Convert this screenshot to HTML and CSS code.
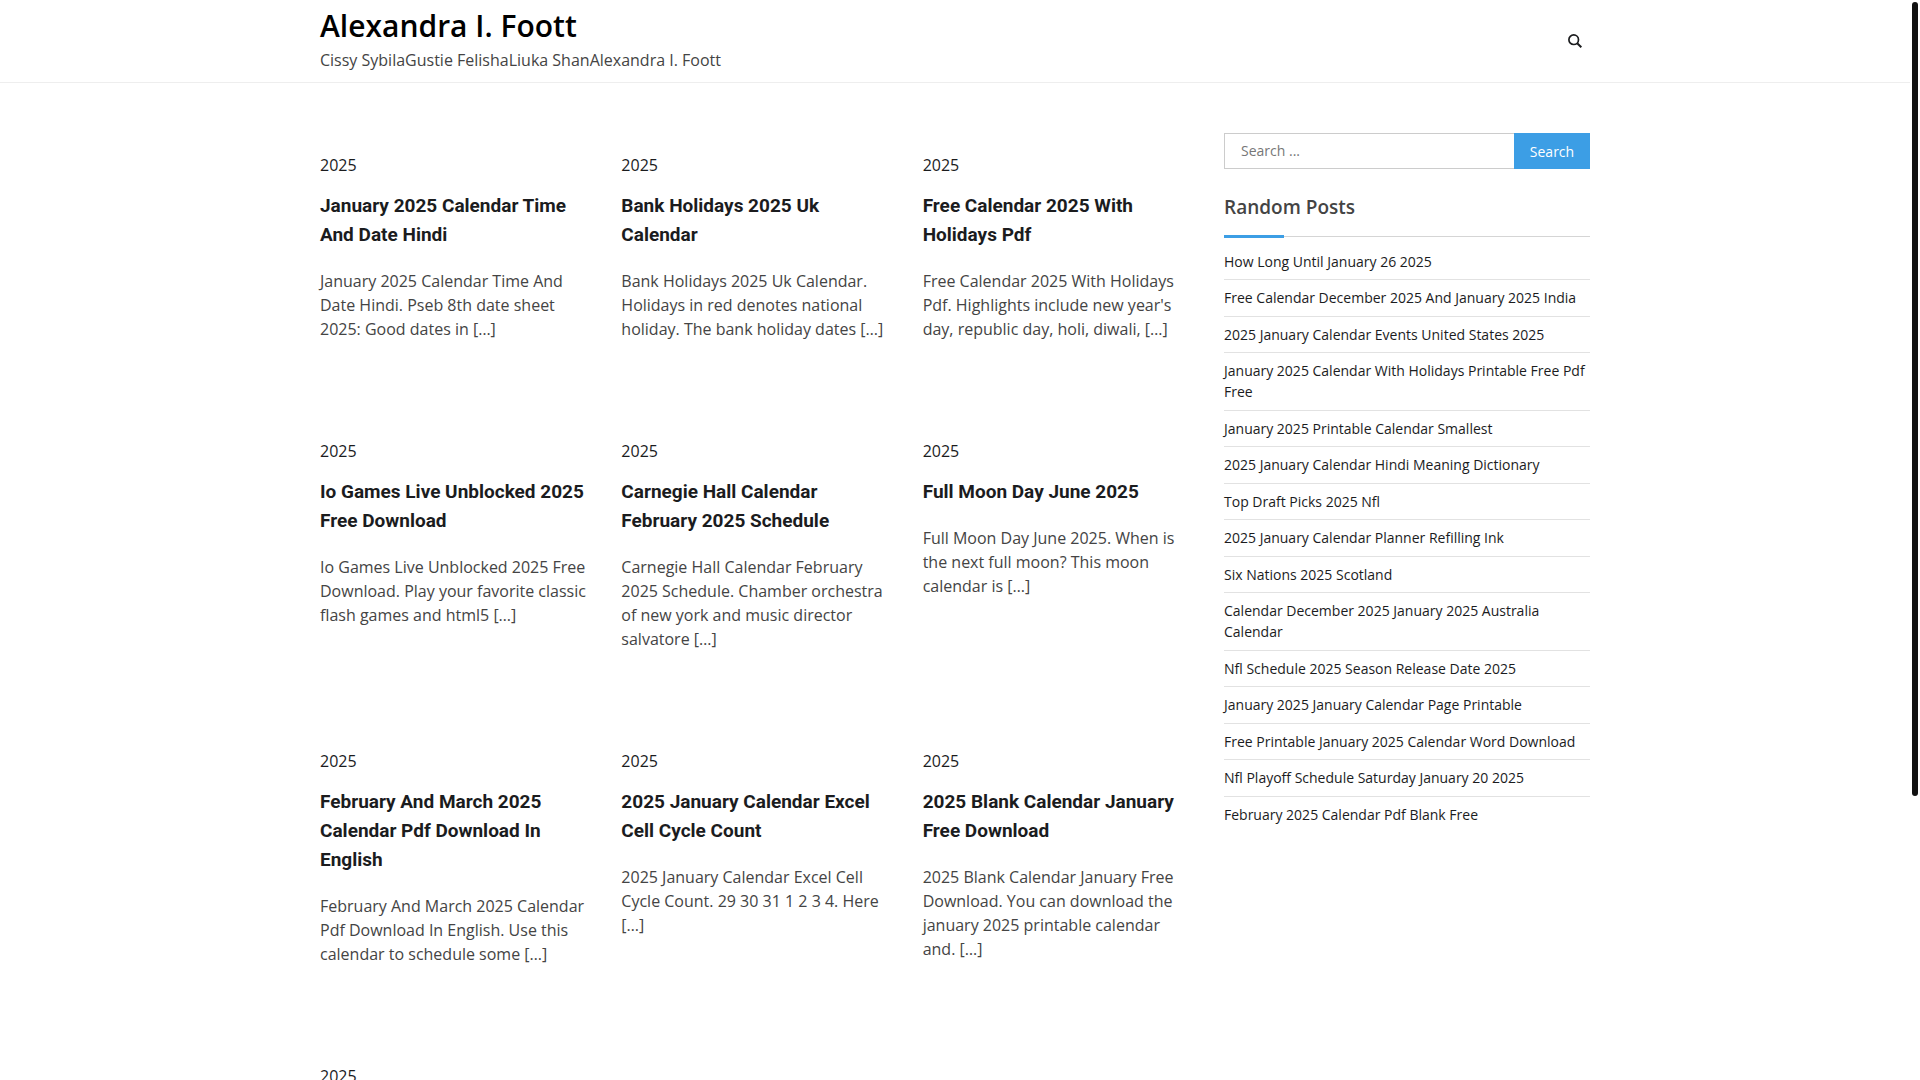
FILE: index.html
```
<!DOCTYPE html>
<html lang="en">
<head>
    <meta charset="UTF-8">
    <meta name="viewport" content="width=device-width, initial-scale=1.0">
    <title>Alexandra I. Foott</title>
    <link rel="stylesheet" href="styles.css">
</head>
<body>

    <header class="site-header">
        <div class="container header-inner">
            <div class="site-branding">
                <p class="site-title"><a href="#">Alexandra I. Foott</a></p>
                <p class="site-description">Cissy SybilaGustie FelishaLiuka ShanAlexandra I. Foott</p>
            </div>
            <button type="button" class="search-toggle" aria-label="Search">
                <svg width="14" height="14" viewBox="0 0 14 14" fill="none" stroke="currentColor">
                    <circle cx="5.7" cy="5.7" r="4.8" stroke-width="1.7" />
                    <path d="M9.2 9.2L13.3 13.3" stroke-width="2" />
                </svg>
            </button>
        </div>
    </header>

    <div class="container content">
        <main class="posts">
            <article class="post">
                <a class="category" href="#">2025</a>
                <h2><a href="#">January 2025 Calendar Time And Date Hindi</a></h2>
                <p>January 2025 Calendar Time And Date Hindi. Pseb 8th date sheet 2025: Good dates in […]</p>
            </article>
            <article class="post">
                <a class="category" href="#">2025</a>
                <h2><a href="#">Bank Holidays 2025 Uk Calendar</a></h2>
                <p>Bank Holidays 2025 Uk Calendar. Holidays in red denotes national holiday. The bank holiday dates […]</p>
            </article>
            <article class="post">
                <a class="category" href="#">2025</a>
                <h2><a href="#">Free Calendar 2025 With Holidays Pdf</a></h2>
                <p>Free Calendar 2025 With Holidays Pdf. Highlights include new year's day, republic day, holi, diwali, […]</p>
            </article>
            <article class="post">
                <a class="category" href="#">2025</a>
                <h2><a href="#">Io Games Live Unblocked 2025 Free Download</a></h2>
                <p>Io Games Live Unblocked 2025 Free Download. Play your favorite classic flash games and html5 […]</p>
            </article>
            <article class="post">
                <a class="category" href="#">2025</a>
                <h2><a href="#">Carnegie Hall Calendar February 2025 Schedule</a></h2>
                <p>Carnegie Hall Calendar February 2025 Schedule. Chamber orchestra of new york and music director salvatore […]</p>
            </article>
            <article class="post">
                <a class="category" href="#">2025</a>
                <h2><a href="#">Full Moon Day June 2025</a></h2>
                <p>Full Moon Day June 2025. When is the next full moon? This moon calendar is […]</p>
            </article>
            <article class="post">
                <a class="category" href="#">2025</a>
                <h2><a href="#">February And March 2025 Calendar Pdf Download In English</a></h2>
                <p>February And March 2025 Calendar Pdf Download In English. Use this calendar to schedule some […]</p>
            </article>
            <article class="post">
                <a class="category" href="#">2025</a>
                <h2><a href="#">2025 January Calendar Excel Cell Cycle Count</a></h2>
                <p>2025 January Calendar Excel Cell Cycle Count. 29 30 31 1 2 3 4. Here […]</p>
            </article>
            <article class="post">
                <a class="category" href="#">2025</a>
                <h2><a href="#">2025 Blank Calendar January Free Download</a></h2>
                <p>2025 Blank Calendar January Free Download. You can download the january 2025 printable calendar and. […]</p>
            </article>
            <article class="post">
                <a class="category" href="#">2025</a>
            </article>
        </main>

        <aside class="sidebar">
            <form class="search-form">
                <input type="search" placeholder="Search ..." aria-label="Search for:">
                <button type="submit">Search</button>
            </form>

            <h2 class="widget-title">Random Posts</h2>
            <ul class="post-list">
                <li><a href="#">How Long Until January 26 2025</a></li>
                <li><a href="#">Free Calendar December 2025 And January 2025 India</a></li>
                <li><a href="#">2025 January Calendar Events United States 2025</a></li>
                <li><a href="#">January 2025 Calendar With Holidays Printable Free Pdf Free</a></li>
                <li><a href="#">January 2025 Printable Calendar Smallest</a></li>
                <li><a href="#">2025 January Calendar Hindi Meaning Dictionary</a></li>
                <li><a href="#">Top Draft Picks 2025 Nfl</a></li>
                <li><a href="#">2025 January Calendar Planner Refilling Ink</a></li>
                <li><a href="#">Six Nations 2025 Scotland</a></li>
                <li><a href="#">Calendar December 2025 January 2025 Australia Calendar</a></li>
                <li><a href="#">Nfl Schedule 2025 Season Release Date 2025</a></li>
                <li><a href="#">January 2025 January Calendar Page Printable</a></li>
                <li><a href="#">Free Printable January 2025 Calendar Word Download</a></li>
                <li><a href="#">Nfl Playoff Schedule Saturday January 20 2025</a></li>
                <li><a href="#">February 2025 Calendar Pdf Blank Free</a></li>
            </ul>
        </aside>
    </div>

    <div class="scroll-thumb"></div>

</body>
</html>
```
FILE: styles.css
```
* {
    margin: 0;
    padding: 0;
    box-sizing: border-box;
}
body {
    font-family: "Open Sans", "Noto Sans", sans-serif;
    font-size: 16px;
    line-height: 24px;
    background-color: #fff;
    color: #444;
    margin-right: 10px;
}
a {
    color: #1b1c1e;
    text-decoration: none;
}
a:hover {
    color: #3c9ee5;
}
.container {
    width: 100%;
    max-width: 1300px;
    margin: 0 auto;
    padding: 0 15px;
}

/* header */
.site-header {
    border-bottom: 1px solid #eee;
}
.header-inner {
    display: flex;
    justify-content: space-between;
    align-items: center;
    padding-top: 8px;
    padding-bottom: 10px;
}
.site-title {
    font-size: 30px;
    font-weight: 600;
    line-height: 36px;
    margin-bottom: 4px;
}
.site-title a {
    color: #000;
}
.search-toggle {
    display: flex;
    padding: 10px 8px 8px;
    border: none;
    background: none;
    color: #1b1c1e;
    cursor: pointer;
}

/* posts */
.content {
    display: flex;
    align-items: flex-start;
    gap: 30px;
    padding-top: 50px;
}
.posts {
    flex: 1;
    display: grid;
    grid-template-columns: repeat(3, 1fr);
    column-gap: 30px;
}
.post {
    padding: 20px 0 78px;
}
.category {
    display: block;
    margin-bottom: 14px;
}
.post h2 {
    font-family: Roboto, sans-serif;
    font-size: 19px;
    font-weight: 700;
    line-height: 29px;
    margin-bottom: 20px;
}

/* sidebar */
.sidebar {
    width: 366px;
}
.search-form {
    display: flex;
    height: 36px;
    margin-bottom: 24px;
}
.search-form input {
    flex: 1;
    min-width: 0;
    padding: 0 16px 2px;
    border: 1px solid #ccc;
    border-right: none;
    font-family: inherit;
    font-size: 14px;
    outline: none;
}
.search-form input::placeholder {
    color: #777;
}
.search-form button {
    width: 76px;
    border: none;
    background-color: #3c9ee5;
    color: #fff;
    font-family: inherit;
    font-size: 14px;
    cursor: pointer;
}
.widget-title {
    position: relative;
    font-size: 19px;
    font-weight: 600;
    line-height: 28px;
    padding-bottom: 15px;
    margin-bottom: 7px;
    border-bottom: 1px solid #d5d5d5;
}
.widget-title::after {
    content: "";
    position: absolute;
    left: 0;
    bottom: -2px;
    width: 60px;
    height: 3px;
    background-color: #3c9ee5;
}
.post-list {
    display: grid;
    min-height: 588px;
    list-style: none;
    font-size: 14px;
    line-height: 21px;
}
.post-list li {
    padding: 7px 0;
    border-bottom: 1px solid #e2e2e2;
}
.post-list li:last-child {
    border-bottom: none;
}

.scroll-thumb {
    position: fixed;
    top: 2px;
    right: 2px;
    width: 6px;
    height: 794px;
    border-radius: 3px;
    background-color: #111;
}
```
